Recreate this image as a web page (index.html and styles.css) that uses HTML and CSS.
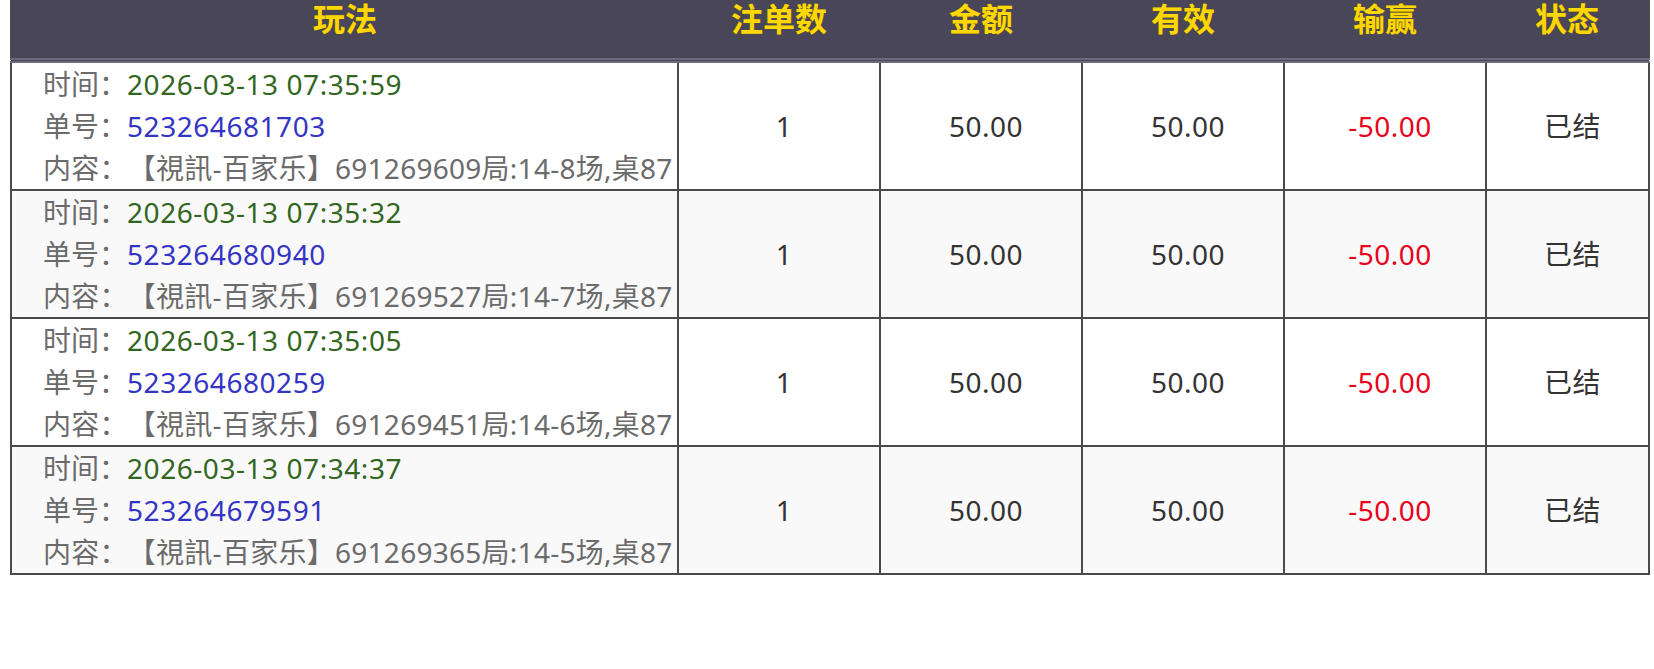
FILE: index.html
```html
<!DOCTYPE html>
<html lang="zh-CN">
<head>
<meta charset="utf-8">
<title>注单记录</title>
<link rel="stylesheet" href="styles.css">
</head>
<body>
<table class="bets">
  <colgroup>
    <col class="c-play">
    <col class="c-num">
    <col class="c-num">
    <col class="c-num">
    <col class="c-num">
    <col class="c-state">
  </colgroup>
  <thead>
    <tr>
      <th>玩法</th>
      <th>注单数</th>
      <th>金额</th>
      <th>有效</th>
      <th>输赢</th>
      <th>状态</th>
    </tr>
  </thead>
  <tbody>
    <tr>
      <td class="info">
        <div><span class="lbl">时间：</span><span class="time">2026-03-13 07:35:59</span></div>
        <div><span class="lbl">单号：</span><span class="no">523264681703</span></div>
        <div class="content">内容：【視訊-百家乐】691269609局:14-8场,桌87</div>
      </td>
      <td>1</td><td>50.00</td><td>50.00</td><td class="loss">-50.00</td><td>已结</td>
    </tr>
    <tr>
      <td class="info">
        <div><span class="lbl">时间：</span><span class="time">2026-03-13 07:35:32</span></div>
        <div><span class="lbl">单号：</span><span class="no">523264680940</span></div>
        <div class="content">内容：【視訊-百家乐】691269527局:14-7场,桌87</div>
      </td>
      <td>1</td><td>50.00</td><td>50.00</td><td class="loss">-50.00</td><td>已结</td>
    </tr>
    <tr>
      <td class="info">
        <div><span class="lbl">时间：</span><span class="time">2026-03-13 07:35:05</span></div>
        <div><span class="lbl">单号：</span><span class="no">523264680259</span></div>
        <div class="content">内容：【視訊-百家乐】691269451局:14-6场,桌87</div>
      </td>
      <td>1</td><td>50.00</td><td>50.00</td><td class="loss">-50.00</td><td>已结</td>
    </tr>
    <tr>
      <td class="info">
        <div><span class="lbl">时间：</span><span class="time">2026-03-13 07:34:37</span></div>
        <div><span class="lbl">单号：</span><span class="no">523264679591</span></div>
        <div class="content">内容：【視訊-百家乐】691269365局:14-5场,桌87</div>
      </td>
      <td>1</td><td>50.00</td><td>50.00</td><td class="loss">-50.00</td><td>已结</td>
    </tr>
  </tbody>
</table>
</body>
</html>
```

FILE: styles.css
```css
html, body {
  margin: 0;
  padding: 0;
  background: #ffffff;
}

body {
  font-family: "Noto Sans", "Noto Sans CJK SC", sans-serif;
  color: #333333;
  text-spacing-trim: space-all;
}

.bets {
  margin-left: 10px;
  width: 1640px;
  border-collapse: collapse;
  table-layout: fixed;
  border: 2px solid #4a4a4a;
  border-top: 0;
}

.c-play { width: 667px; }
.c-num { width: 202px; }
.c-state { width: 163px; }

.bets th {
  background: #49465a;
  color: #ffd700;
  font-weight: bold;
  font-size: 32px;
  line-height: 38px;
  height: 58px;
  padding: 0;
  vertical-align: top;
  text-align: center;
  text-shadow: 0 0 1px #6b5a10;
  border-bottom: 5px double #6d6a80;
}

.bets td {
  border: 2px solid #4a4a4a;
  padding: 0 0 0 10px;
  font-size: 28px;
  line-height: 42px;
  letter-spacing: 0.5px;
  text-align: center;
  vertical-align: middle;
  white-space: nowrap;
}

.bets tbody tr:nth-child(even) td {
  background: #f9f9f9;
}

.bets td.info {
  text-align: left;
  padding-left: 31px;
  letter-spacing: 0;
  overflow: hidden;
}

.lbl { color: #6b6b6b; }
.time { color: #33661f; letter-spacing: 0.55px; }
.no { color: #3535c4; letter-spacing: 0.55px; }
.content { color: #6b6b6b; letter-spacing: 0.27px; }
.loss { color: #e8001c; }
```
